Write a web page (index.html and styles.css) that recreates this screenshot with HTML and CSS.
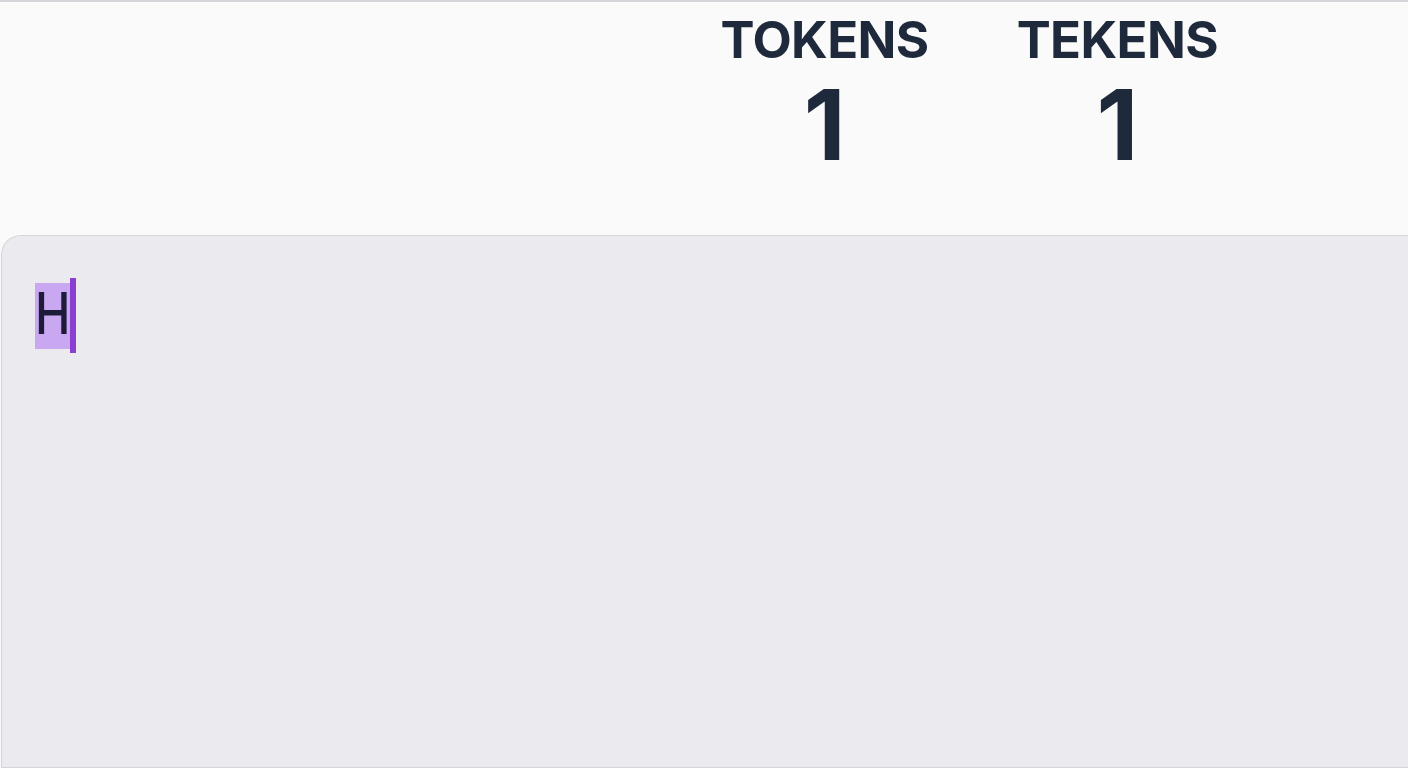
FILE: index.html
```html
<!DOCTYPE html>
<html lang="en">
<head>
    <meta charset="UTF-8">
    <meta name="viewport" content="width=device-width, initial-scale=1.0">
    <title>Token Counter</title>
    <link rel="stylesheet" href="styles.css">
</head>
<body>

    <div class="page">
        <div class="stats">
            <div class="stat">
                <div class="stat-label">TOKENS</div>
                <div class="stat-value">1</div>
            </div>
            <div class="stat">
                <div class="stat-label">TEKENS</div>
                <div class="stat-value">1</div>
            </div>
        </div>

        <!-- Editor -->
        <div class="editor">
            <span class="token"><span class="glyph">H</span></span><span class="caret"></span>
        </div>
    </div>

</body>
</html>
```

FILE: styles.css
```css
body {
    margin: 0;
    padding: 0;
    font-family: Inter, "Liberation Sans", Arial, sans-serif;
    background-color: #fafafb;
    color: #1e293b;
    overflow: hidden;
}

.page {
    height: 766px;
    border-top: 2px solid #d6d6da;
    display: flex;
    flex-direction: column;
}

.stats {
    height: 233px;
    display: flex;
    justify-content: flex-end;
    gap: 88px;
    padding-right: 190px;
    box-sizing: border-box;
}

.stat {
    display: flex;
    flex-direction: column;
    align-items: center;
}

.stat-label {
    font-size: 51px;
    font-weight: 700;
    line-height: 1;
    letter-spacing: -0.6px;
    margin-top: 12px;
}

.stat-value {
    font-size: 97px;
    font-weight: 700;
    line-height: 1;
    margin-top: 11px;
}

.editor {
    flex: 1;
    margin-left: 1px;
    background-color: #ebebef;
    border: 1px solid #d6d6da;
    border-right: none;
    border-radius: 20px 0 0 0;
    padding: 42px 0 0 33px;
    display: flex;
    align-items: flex-start;
}

.token {
    display: inline-block;
    height: 66px;
    margin-top: 5px;
    background-color: #c9a8f1;
    color: #1e1b3a;
}

.glyph {
    display: inline-block;
    font-size: 58px;
    font-weight: 500;
    line-height: 60px;
    margin-right: -8px;
    transform: scaleX(0.82);
    transform-origin: left center;
}

.caret {
    display: inline-block;
    width: 6px;
    height: 75px;
    background-color: #8b3fd2;
}
```
